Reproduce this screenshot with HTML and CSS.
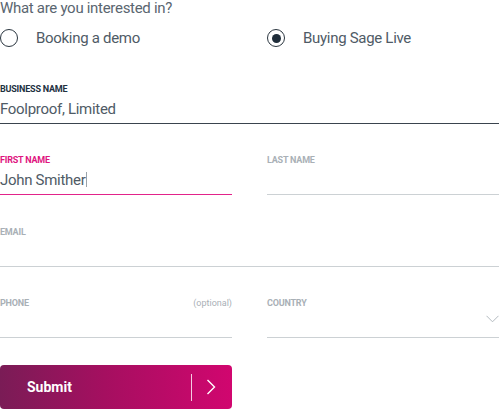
FILE: index.html
```html
<!DOCTYPE html>
<html>
<head>
<meta charset="utf-8">
<link rel="stylesheet" href="styles.css">
</head>
<body>
<form class="form">
  <p class="question">What are you interested in?</p>
  <div class="radios">
    <label class="radio"><span class="dot"></span><span>Booking a demo</span></label>
    <label class="radio"><span class="dot checked"></span><span>Buying Sage Live</span></label>
  </div>
  <div class="field filled">
    <div class="label"><span>Business name</span></div>
    <div class="value">Foolproof, Limited</div>
  </div>
  <div class="row">
    <div class="field focus">
      <div class="label"><span>First name</span></div>
      <div class="value">John Smither<span class="caret"></span></div>
    </div>
    <div class="field">
      <div class="label"><span>Last name</span></div>
      <div class="value"></div>
    </div>
  </div>
  <div class="field wide">
    <div class="label"><span>Email</span></div>
    <div class="value"></div>
  </div>
  <div class="row">
    <div class="field">
      <div class="label"><span>Phone</span><span class="opt">(optional)</span></div>
      <div class="value"></div>
    </div>
    <div class="field">
      <div class="label"><span>Country</span></div>
      <div class="value select">
        <svg class="chev" width="13" height="8" viewBox="0 0 13 8"><path d="M0.5 0.8 L6.5 6.8 L12.5 0.8" fill="none" stroke="#b3babf" stroke-width="1"/></svg>
      </div>
    </div>
  </div>
  <div class="actions">
    <button type="button" class="submit">
      <span class="submit-text">Submit</span>
      <span class="sep"></span>
      <svg class="arrow" width="10" height="16" viewBox="0 0 10 16"><path d="M1.5 1 L8.5 8 L1.5 15" fill="none" stroke="#fff" stroke-width="1.4"/></svg>
    </button>
  </div>
</form>
</body>
</html>
```
FILE: styles.css
```css
html, body {
  margin: 0;
  padding: 0;
  background: #fff;
}
body {
  font-family: "Roboto", "Liberation Sans", sans-serif;
  color: #4f5b66;
  width: 500px;
  height: 409px;
  overflow: hidden;
}
.form {
  width: 499px;
  display: flex;
  flex-direction: column;
}
.question {
  margin: 0;
  font-size: 15px;
  line-height: 16px;
  letter-spacing: -0.3px;
  color: #5a6670;
}
.radios {
  display: grid;
  grid-template-columns: 232px 232px;
  column-gap: 35px;
  margin-top: 13px;
  height: 18px;
}
.radio {
  display: flex;
  align-items: center;
  gap: 18px;
  font-size: 15px;
  letter-spacing: -0.3px;
  color: #4f5b66;
}
.dot {
  width: 18px;
  height: 18px;
  box-sizing: border-box;
  border: 1.5px solid #2b3640;
  border-radius: 50%;
  display: flex;
  align-items: center;
  justify-content: center;
  flex: none;
}
.dot.checked::after {
  content: "";
  width: 9px;
  height: 9px;
  border-radius: 50%;
  background: #1f2d3a;
}
.row {
  display: grid;
  grid-template-columns: 232px 232px;
  column-gap: 35px;
}
.field {
  display: flex;
  flex-direction: column;
  border-bottom: 1px solid #ccd1d4;
  margin-top: 30px;
}
.field.wide {
  margin-top: 31px;
}
.radios + .field {
  margin-top: 36px;
}
.label {
  display: flex;
  justify-content: space-between;
  font-size: 9px;
  line-height: 12px;
  font-weight: 700;
  text-transform: uppercase;
  color: #a9b0b6;
  letter-spacing: -0.2px;
}
.opt {
  text-transform: none;
  font-weight: 400;
  font-size: 9px;
  letter-spacing: 0;
}
.value {
  margin-top: 4px;
  height: 20px;
  padding-bottom: 4px;
  font-size: 15px;
  line-height: 20px;
  letter-spacing: -0.3px;
  color: #4f5b66;
  position: relative;
}
.field.filled {
  border-bottom-color: #3a444e;
}
.field.filled .label {
  color: #22313f;
}
.field.focus {
  border-bottom-color: #e2238a;
}
.field.focus .label {
  color: #e0157f;
}
.caret {
  display: inline-block;
  width: 1px;
  height: 15px;
  background: #9aa3aa;
  vertical-align: -2px;
  margin-left: 1px;
}
.select {
  display: flex;
  justify-content: flex-end;
  align-items: flex-start;
}
.chev {
  margin-top: 2px;
}
.actions {
  margin-top: 27px;
}
.submit {
  width: 232px;
  height: 44px;
  border: 0;
  border-radius: 4px;
  background: linear-gradient(90deg, #7a1c56 0%, #a50f60 45%, #d1066f 100%);
  color: #fff;
  display: flex;
  align-items: center;
  padding: 0 0 0 27px;
  font-family: "Roboto", "Liberation Sans", sans-serif;
  cursor: pointer;
}
.submit-text {
  font-size: 14px;
  font-weight: 700;
  flex: 1;
  text-align: left;
}
.sep {
  width: 1px;
  height: 27px;
  background: rgba(255,255,255,0.8);
  margin-right: 14px;
}
.arrow {
  margin-right: 16px;
}
```
